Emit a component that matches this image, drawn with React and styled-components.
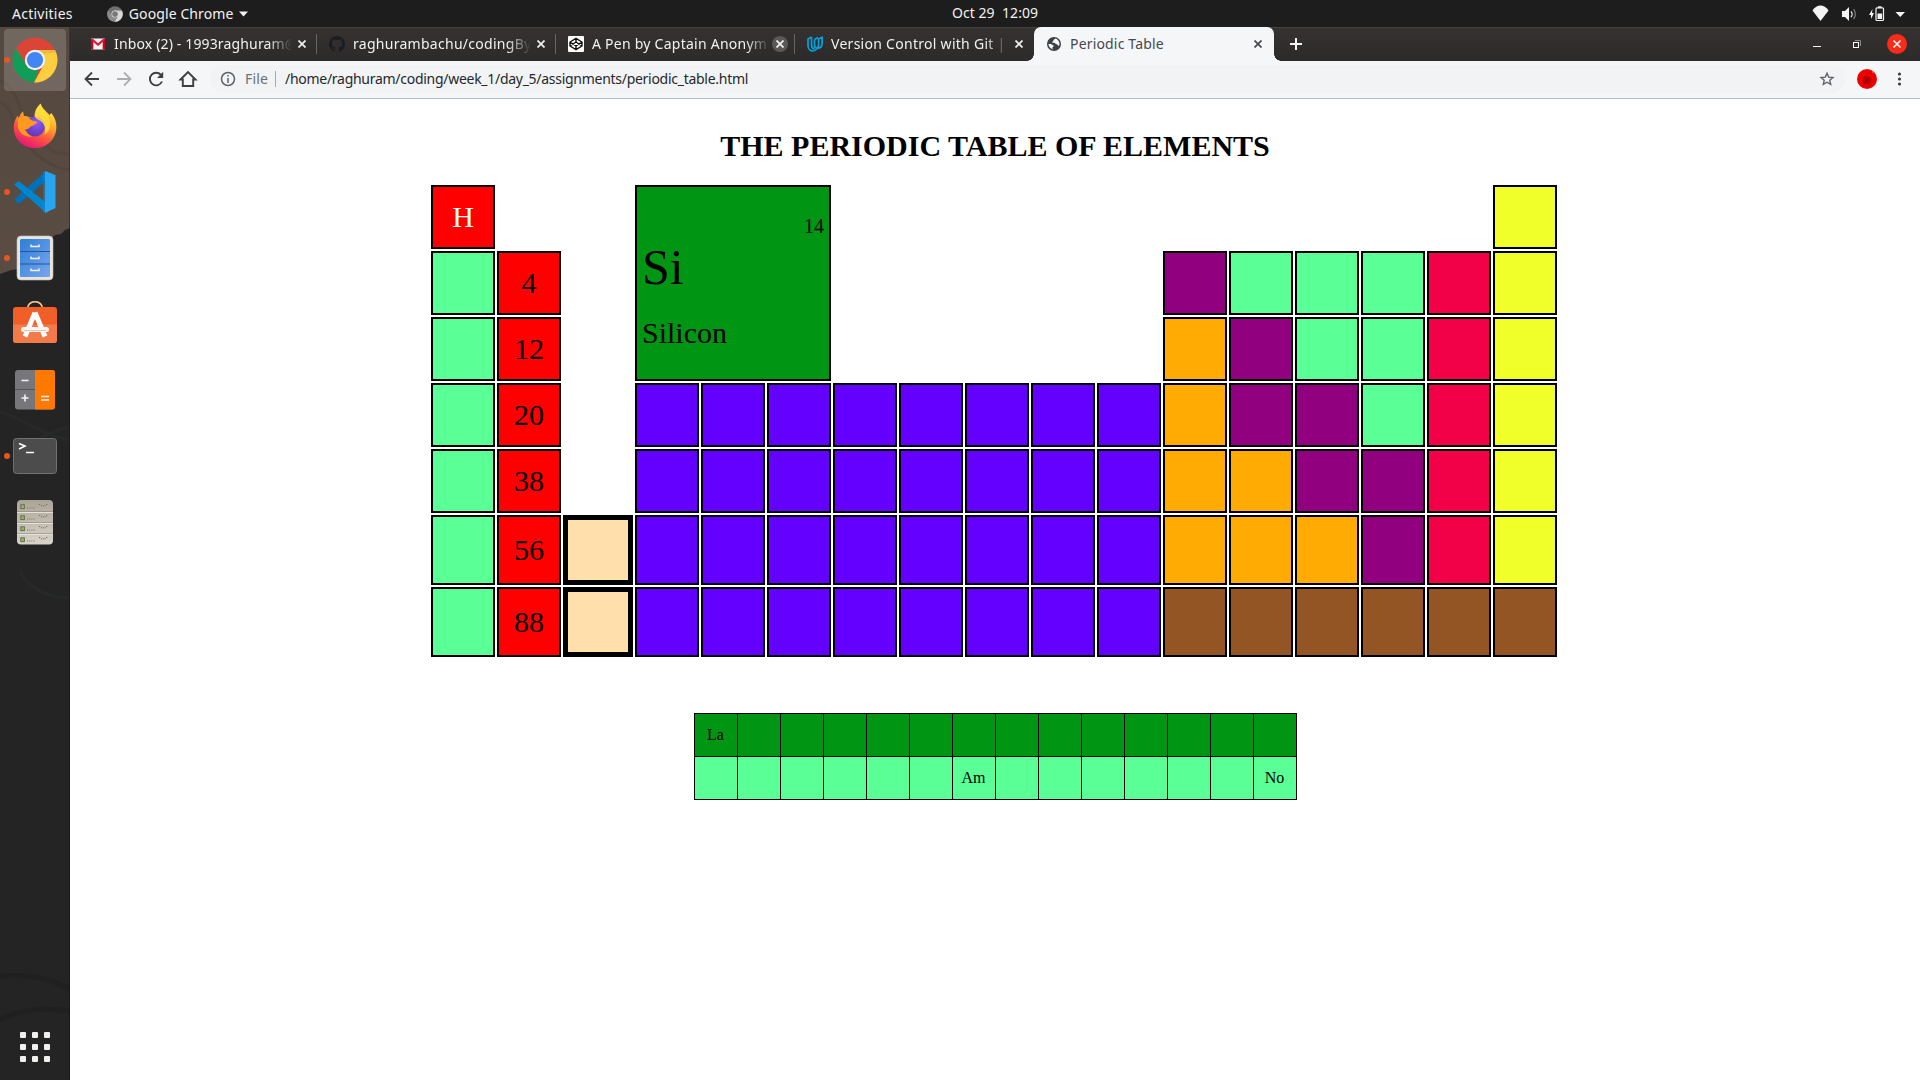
import React from "react";
import styled, { createGlobalStyle } from "styled-components";

const GlobalStyle = createGlobalStyle`
  *, *::before, *::after { box-sizing: border-box; }
  html, body { margin: 0; padding: 0; }
  body { background: #fff; overflow: hidden; }
  svg { display: block; flex: none; }
`;

const ui = `"Noto Sans", "Open Sans", sans-serif`;
const serif = `"Liberation Serif", "Times New Roman", serif`;

const Desktop = styled.div`
  width: 1920px;
  height: 1080px;
  display: grid;
  grid-template-rows: 27px 1fr;
  font-family: ${ui};
`;

/* ---------- Top panel ---------- */
const TopPanel = styled.header`
  display: grid;
  grid-template-columns: 952px 1fr auto;
  align-items: center;
  background: #1d1d1d;
  color: #f2f2f2;
  font-size: 14px;
  line-height: 26px;
  height: 27px;
  padding-right: 15px;
`;
const PanelGroup = styled.div`
  display: flex;
  align-items: center;
  height: 26px;
`;
const PanelText = styled.span`
  letter-spacing: ${(p) => p.$spacing || 0}px;
  margin-left: ${(p) => p.$left || 0}px;
  margin-right: ${(p) => p.$right || 0}px;
  white-space: pre;
`;
const Clock = styled(PanelText)`
  line-height: 24px;
  margin-bottom: 2px;
`;

/* ---------- Workspace and dock ---------- */
const Workspace = styled.div`
  display: grid;
  grid-template-columns: 70px 1fr;
  min-height: 0;
`;
const Dock = styled.nav`
  display: grid;
  grid-template: 1053px / 70px;
  & > * { grid-area: 1 / 1; }
`;
const DockItems = styled.div`
  display: flex;
  flex-direction: column;
  gap: 4px;
  padding: 2px 4px 2px;
  z-index: 1;
  border-right: 1px solid rgba(0, 0, 0, 0.3);
`;
const DockTile = styled.div`
  width: 62px;
  height: 62px;
  display: flex;
  align-items: center;
  border-radius: 4px;
  background: ${(p) => (p.$active ? "rgba(255,255,255,0.17)" : "transparent")};
  margin-top: ${(p) => (p.$last ? "auto" : 0)};
`;
const RunningDot = styled.i`
  width: 6px;
  height: 6px;
  border-radius: 50%;
  margin-right: 2px;
  background: ${(p) => (p.$on ? "#e95420" : "transparent")};
`;

/* ---------- Browser window ---------- */
const Browser = styled.main`
  display: grid;
  grid-template-rows: 34px 38px 1fr;
  min-width: 0;
`;
const TabStrip = styled.div`
  display: flex;
  background: linear-gradient(#353230, #2d2a2b);
  box-shadow: inset 0 1px 0 #45423e;
  padding-left: 8px;
`;
const Tab = styled.div`
  width: ${(p) => (p.$active ? 240 : 239)}px;
  height: 34px;
  display: flex;
  align-items: center;
  padding-left: 12px;
  color: ${(p) => (p.$active ? "#45484c" : "#f1f1f1")};
  background: ${(p) => (p.$active ? "#f5f6f8" : "transparent")};
  border-radius: 7px 7px 0 0;
  position: relative;
  &::before, &::after {
    content: "";
    display: ${(p) => (p.$active ? "block" : "none")};
    position: absolute;
    bottom: 0;
    width: 7px;
    height: 7px;
  }
  &::before {
    left: -7px;
    background: radial-gradient(circle at 0 0, transparent 6.5px, #f5f6f8 7px);
  }
  &::after {
    right: -7px;
    background: radial-gradient(circle at 100% 0, transparent 6.5px, #f5f6f8 7px);
  }
`;
const TabTitle = styled.span`
  width: 178px;
  margin-left: 8px;
  font-size: 14px;
  line-height: 32px;
  white-space: nowrap;
  letter-spacing: ${(p) => p.$spacing || 0}px;
  mask-image: ${(p) => (p.$fade ? "linear-gradient(90deg, #000 154px, transparent 178px)" : "none")};
`;
const TabClose = styled.span`
  width: 16px;
  height: 16px;
  margin-left: 2px;
  border-radius: 50%;
  display: grid;
  place-items: center;
  background: ${(p) => (p.$hover ? "#5b5958" : "transparent")};
`;
const TabDivider = styled.i`
  width: 1px;
  height: 20px;
  margin-left: auto;
  background: #686665;
`;
const NewTab = styled.div`
  width: 30px;
  margin-left: 7px;
  display: grid;
  place-items: center;
`;
const WindowButtons = styled.div`
  display: flex;
  align-items: center;
  gap: 20px;
  margin-left: auto;
  padding-right: 13px;
`;

const Toolbar = styled.div`
  display: flex;
  align-items: center;
  background: #f5f6f8;
  border-bottom: 1px solid #b8bfc9;
  padding: 0 11px 1px 12px;
`;
const NavButtons = styled.div`
  display: flex;
  gap: 12px;
`;
const Omnibox = styled.div`
  flex: 1;
  height: 28px;
  margin: 0 12px;
  padding: 0 8px 0 9px;
  border-radius: 14px;
  background: #f1f3f4;
  display: flex;
  align-items: center;
  font-size: 14px;
  line-height: 26px;
`;
const Scheme = styled.span`
  margin-left: 8px;
  color: #6c7075;
  letter-spacing: 0.2px;
  width: 30px;
`;
const SchemeDivider = styled.i`
  width: 1px;
  height: 16px;
  background: #a9abae;
  margin-right: 9px;
`;
const Url = styled.span`
  color: #26282b;
  letter-spacing: -0.28px;
  flex: 1;
  white-space: nowrap;
`;
const MenuButton = styled.div`
  margin-left: 10px;
`;

/* ---------- Page ---------- */
const Page = styled.section`
  background: #fff;
  display: flex;
  flex-direction: column;
  align-items: center;
  font-family: ${serif};
  color: #000;
`;
const Title = styled.h1`
  font-size: 30px;
  line-height: 34px;
  font-weight: bold;
  margin: 30px 0 22px;
`;
const Elements = styled.div`
  display: grid;
  grid-template-columns: 64px 64px 70px repeat(14, 64px);
  grid-template-rows: repeat(5, 64px) 70px 70px;
  gap: 2px;
  margin-right: 2px;
`;
const fills = {
  g: "#5aff96",
  r: "#ff0000",
  c: "#ffe0ad",
  v: "#6400ff",
  p: "#91007f",
  o: "#ffab03",
  k: "#f20048",
  y: "#f0ff29",
  b: "#935524",
  d: "#009614",
};
const Cell = styled.div`
  grid-column: ${(p) => p.$col};
  grid-row: ${(p) => p.$row};
  border: ${(p) => (p.$kind === "c" ? 5 : 2)}px solid #000;
  background: ${(p) => fills[p.$kind]};
  color: ${(p) => (p.$light ? "#fff" : "#000")};
  display: grid;
  place-items: center;
  font-size: 30px;
  line-height: 34px;
`;
const Featured = styled.div`
  grid-column: 4 / span 3;
  grid-row: 1 / span 3;
  border: 2px solid #000;
  background: ${fills.d};
  padding: 28px 5px 0;
  display: flex;
  flex-direction: column;
`;
const AtomicNumber = styled.span`
  align-self: flex-end;
  font-size: 20px;
  line-height: 23px;
`;
const Symbol = styled.span`
  font-size: 50px;
  line-height: 58px;
`;
const ElementName = styled.span`
  margin-top: 20px;
  font-size: 30px;
  line-height: 34px;
`;
const Series = styled.div`
  display: grid;
  grid-template-columns: repeat(14, 43px);
  grid-auto-rows: 43px;
  border-top: 1px solid #000;
  border-left: 1px solid #000;
  margin-top: 56px;
`;
const SeriesCell = styled.div`
  border-right: 1px solid #000;
  border-bottom: 1px solid #000;
  background: ${(p) => fills[p.$kind]};
  display: grid;
  place-items: center;
  font-size: 16px;
  line-height: 18px;
`;

const rows = [
  "r...............y",
  "gr.........pgggky",
  "gr.........opggky",
  "gr.vvvvvvvvoppgky",
  "gr.vvvvvvvvooppky",
  "grcvvvvvvvvooopky",
  "grcvvvvvvvvbbbbbb",
];
const labels = { "0-0": "H", "1-1": "4", "2-1": "12", "3-1": "20", "4-1": "38", "5-1": "56", "6-1": "88" };
const seriesLabels = { 0: "La", 20: "Am", 27: "No" };

/* ---------- Icons ---------- */
const ChromeIcon = ({ size = 46, mono }) => {
  const c = mono ? ["#6f6f6f", "#8c8c8c", "#d8d8d8", "#777"] : ["#db4437", "#0f9d58", "#ffcd40", "#4285f4"];
  return (
    <svg width={size} height={size} viewBox="0 0 46 46">
      <circle cx="23" cy="23" r="22.4" fill={c[0]} />
      <path d="M23 13h20.1A22.4 22.4 0 0 1 22 45.4L31.7 28z" fill={c[2]} />
      <path d="M3.9 11.3 14.3 28a10 10 0 0 0 12.5 4.2L22 45.4A22.4 22.4 0 0 1 3.9 11.3z" fill={c[1]} />
      <path d="M23 13h20.1l1 2.5L31 17z" fill="#000" opacity=".08" />
      <circle cx="23" cy="23" r="10.2" fill={mono ? "#e2e2e2" : "#f4f4f4"} />
      <circle cx="23" cy="23" r="8.1" fill={c[3]} />
    </svg>
  );
};
const FirefoxIcon = () => (
  <svg width="46" height="46" viewBox="0 .5 46 48">
    <defs>
      <linearGradient id="ffBody" x1=".8" y1="0" x2=".3" y2="1">
        <stop offset="0" stopColor="#fff44f" />
        <stop offset=".35" stopColor="#ffb42c" />
        <stop offset=".65" stopColor="#ff5a3c" />
        <stop offset="1" stopColor="#e4127c" />
      </linearGradient>
      <radialGradient id="ffGlobe" cx=".6" cy=".3" r=".8">
        <stop offset="0" stopColor="#9059ff" />
        <stop offset=".6" stopColor="#7040c8" />
        <stop offset="1" stopColor="#5b3aa8" />
      </radialGradient>
    </defs>
    <path d="M29 1c1 5 6 8 9 12l2-2c4 5 5.500 10 5.300 15C45 38 35.500 47.500 23 47.500S.8 38.500.8 26c0-6 2.200-10 4.200-12.500L6 17c1-4 2.500-6 4.500-8l1 5c2.500 0 4 .5 5.500 1.500h5.500C22 9 25 4.500 29 1z" fill="url(#ffBody)" />
    <circle cx="23" cy="25" r="10.500" fill="url(#ffGlobe)" />
    <path d="M5.500 16c6-3 10-2 13 2 2 1.500 5 1.500 7 2-1 3-4 3.500-6 4.500-3 1.500-3 4-7.500 3.500 2 3.500 4 6 8 7.500-8 1-14-4-15-11z" fill="#ff9a1f" />
    <path d="M29 2c0 6 7 9 9 16 2 6 0 13-5 16 1-5 1-9-2-13-3-3-6-3-8-6 0-5 2-10 6-13z" fill="#ffe13c" opacity=".8" />
  </svg>
);
const CodeIcon = () => (
  <svg width="46" height="46" viewBox="0 0 46 46">
    <path d="M2 30.500 6.500 35 36 10V2L33 2.500z" fill="#0070b8" />
    <path d="M2 15.500 6.500 12 36 35v8.500l-3-.5z" fill="#0086ce" />
    <path d="M33 2 43.500 6v33L33 44z" fill="#27a4f2" />
    <path d="M32.500 2v42l-1-1V3z" fill="#1685cf" />
  </svg>
);
const FilesIcon = () => (
  <svg width="46" height="46" viewBox="0 0 46 46">
    <defs>
      <linearGradient id="drawer" x1="0" y1="0" x2="1" y2="1">
        <stop offset="0" stopColor="#2c7fd8" />
        <stop offset="1" stopColor="#7aa6ee" />
      </linearGradient>
    </defs>
    <rect x="5" y="1" width="36" height="44" rx="4" fill="#e9e4dc" stroke="#c8c1b7" strokeWidth=".6" />
    <rect x="8" y="4" width="30" height="38" rx="1.500" fill="url(#drawer)" />
    <path d="M8 16.500h30M8 29h30" stroke="#23549c" />
    <path d="M19 9.500v2h8v-2M19 21.500v2h8v-2M19 33.500v2h8v-2" fill="none" stroke="#f3efe9" strokeWidth="1.500" />
  </svg>
);
const SoftwareIcon = () => (
  <svg width="46" height="46" viewBox="0 1.500 46 46">
    <path d="M15.500 9a7.500 6.800 0 0 1 15 0" fill="none" stroke="#efc18b" strokeWidth="1.800" />
    <rect x="1" y="7.500" width="44" height="36" rx="3" fill="#f05f27" />
    <path d="M1 25h44v15.500a3 3 0 0 1-3 3H4a3 3 0 0 1-3-3z" fill="#f37a49" />
    <path d="M23 13v.1L13 37M23 13l10 24" stroke="#fff" strokeWidth="5" fill="none" strokeLinejoin="bevel" />
    <path d="M11.500 30h23" stroke="#fff4ee" strokeWidth="5" strokeLinecap="round" />
    <path d="M12 31h22" stroke="#e2b9a8" strokeWidth=".8" />
  </svg>
);
const CalculatorIcon = () => (
  <svg width="46" height="46" viewBox="0 0 46 46">
    <rect x="3" y="3" width="40" height="39.500" rx="3" fill="#77767b" />
    <path d="M23 3h17a3 3 0 0 1 3 3v33.500a3 3 0 0 1-3 3H23z" fill="#ff7800" />
    <path d="M3 22.500h20" stroke="#55545a" />
    <path d="M9.500 13.500h7M9.500 31h7M13 27.500v7M29 29.500h8M29 33h8" stroke="#f4f4f4" strokeWidth="1.600" />
  </svg>
);
const TerminalIcon = () => (
  <svg width="46" height="46" viewBox="0 0 46 46">
    <rect x="1.500" y="5.500" width="43" height="35" rx="3" fill="#4c4c4c" stroke="#717171" />
    <path d="M7 10.500 13 13l-6 3" fill="none" stroke="#fff" strokeWidth="1.600" />
    <path d="M14 19.500h8" stroke="#fff" strokeWidth="1.500" />
  </svg>
);
const ServersIcon = () => (
  <svg width="46" height="46" viewBox="0 0 46 46">
    <defs>
      <linearGradient id="rack" x1="0" y1="0" x2="0" y2="1">
        <stop offset="0" stopColor="#aba496" />
        <stop offset="1" stopColor="#d9d4ca" />
      </linearGradient>
    </defs>
    <rect x="5" y="1" width="36" height="44.500" rx="4" fill="url(#rack)" />
    {[0, 1, 2, 3].map((i) => (
      <g key={i} transform={`translate(0 ${i * 11})`}>
        {i > 0 && <path d="M5 2.500h36" stroke="#f2efe9" />}
        {i > 0 && <path d="M5 1.700h36" stroke="#827b70" strokeWidth=".6" />}
        <rect x="8.800" y="5.800" width="3.600" height="3.800" fill="#8ac541" stroke="#6b6a60" />
        <path d="M15 9h8" stroke="#777064" strokeDasharray="1 1.200" />
        <path d="M27 5.500h2m5 0h2M29 6.800h5" stroke="#777064" strokeDasharray="1 .8" />
      </g>
    ))}
  </svg>
);
const AppsIcon = () => (
  <svg width="46" height="46" viewBox="0 0 46 46">
    {[8, 20, 32].map((y) =>
      [8, 20, 32].map((x) => <rect key={`${x}${y}`} x={x} y={y} width="6" height="6" rx="1" fill="#f0f0ee" />)
    )}
  </svg>
);
const Wallpaper = () => (
  <svg width="70" height="1053" viewBox="0 0 70 1053">
    <defs>
      <linearGradient id="clay" x1="0" y1="0" x2="0" y2="1">
        <stop offset="0" stopColor="#54493f" />
        <stop offset="1" stopColor="#5a4c43" />
      </linearGradient>
    </defs>
    <rect width="70" height="1053" fill="#232423" />
    <path d="M0 0h70v201l-5 2-4 4-6 1-4 4-9 6-14 9-8 15-9 1-11 4z" fill="url(#clay)" />
    <path d="M0 54c18 2 20 42 40 60s22 10 30 14M0 75c14 4 14 32 34 50s28 16 36 18" fill="none" stroke="#4b4037" strokeWidth="3" opacity=".5" />
    <path d="M0 949c25-2 50 2 70 13M0 993c22-12 44-12 70-9" fill="none" stroke="#1b1c1b" strokeWidth="5" opacity=".5" />
    <path d="M0 385c20 5 45 24 70 28M10 430c22-16 40-26 60-30M20 545c8 16 26 25 50 26" fill="none" stroke="#2a2c2b" strokeWidth="3" opacity=".7" />
  </svg>
);
const CloseGlyph = ({ color = "#f1f1f1" }) => (
  <svg width="8" height="8" viewBox="0 0 8 8">
    <path d="M.5.5l7 7M7.500.5l-7 7" stroke={color} strokeWidth="1.700" />
  </svg>
);
const GmailIcon = () => (
  <svg width="16" height="16" viewBox="0 0 16 16">
    <rect x="1" y="2.500" width="14" height="11" rx=".8" fill="#f3f3f3" />
    <path d="M1 13V3l2.300.5V13.500H1.500zM15 13V3l-2.300.5V13.500h1.800z" fill="#d0021b" />
    <path d="M2 3.500l6 5 6-5" fill="none" stroke="#e2173a" strokeWidth="2.200" />
  </svg>
);
const GithubIcon = () => (
  <svg width="16" height="16" viewBox="0 0 16 16">
    <path fill="#1b1d20" d="M8 0C3.580 0 0 3.580 0 8c0 3.540 2.290 6.530 5.470 7.590.4.070.55-.17.55-.38 0-.19-.01-.82-.01-1.490-2.010.37-2.530-.49-2.690-.94-.09-.23-.48-.94-.82-1.130-.28-.15-.68-.52-.01-.53.63-.01 1.080.58 1.230.82.72 1.210 1.870.87 2.330.66.070-.52.28-.87.51-1.070-1.780-.2-3.640-.89-3.640-3.950 0-.87.31-1.590.82-2.150-.08-.2-.36-1.020.08-2.120 0 0 .67-.21 2.200.82a7.500 7.500 0 0 1 4 0c1.530-1.040 2.200-.82 2.200-.82.44 1.100.16 1.920.08 2.120.51.56.82 1.270.82 2.150 0 3.070-1.870 3.750-3.650 3.950.29.25.54.73.54 1.480 0 1.070-.01 1.930-.01 2.200 0 .21.15.46.55.38A8 8 0 0 0 16 8c0-4.420-3.580-8-8-8z" />
  </svg>
);
const CodepenIcon = () => (
  <svg width="16" height="16" viewBox="0 0 16 16">
    <rect width="16" height="16" rx="1" fill="#fff" />
    <path d="M8 2.300 14 6v4l-6 3.700L2 10V6zM2 6l6 4 6-4M2 10l6-4 6 4M8 2.300V6M8 10v3.700" fill="none" stroke="#111" strokeWidth="1.400" strokeLinejoin="round" />
  </svg>
);
const UdacityIcon = () => (
  <svg width="16" height="16" viewBox="0 0 16 16" fill="none" stroke="#02a5df" strokeWidth="1.700" strokeLinejoin="round">
    <path d="M4.500 1 1 3v6.500c0 3 2 5.500 4.700 5.500 1.300 0 2.500-.5 3.500-1.500" />
    <path d="M4.500 1v8c0 2 1.200 3.600 3 4.200M7.500 3.500 11 1.500" />
    <path d="M7.500 3.500V9c0 2 1 3.200 2.700 3.200 3 0 4.900-2 4.900-5V1.200L11.600 3v6c0 1.500-.5 3-2.400 4.500" />
  </svg>
);
const GlobeIcon = () => (
  <svg width="16" height="16" viewBox="0 0 16 16">
    <circle cx="8" cy="8" r="7" fill="#3c4043" />
    <path d="M9.200 2.500c-.6 1-1.700 1-1.900 2-.2 1.200-1 1-1.200 1.900.9.800 2.700-.2 3.300 1.200.4 1 2 .4 2.500 1.600.3 1 1 .8 1.500-.2A5.500 5.500 0 0 0 9.200 2.500zM2.500 7.800c.9.500 2.200-.1 3.200.7 1 .8 2.200.6 2 1.600-.3 1-1.400 1-1.300 2.100.1.600.6.700 1 1.200a5.500 5.500 0 0 1-4.900-5.600z" fill="#f5f6f8" />
  </svg>
);

const tabs = [
  { icon: <GmailIcon />, title: "Inbox (2) - 1993raghuram@", spacing: 0.15 },
  { icon: <GithubIcon />, title: "raghurambachu/codingBy", spacing: 0.28 },
  { icon: <CodepenIcon />, title: "A Pen by Captain Anonym", spacing: 0.25, hover: true },
  { icon: <UdacityIcon />, title: "Version Control with Git |", spacing: 0.28 },
];
const dockApps = [
  { icon: <ChromeIcon />, running: true, active: true },
  { icon: <FirefoxIcon /> },
  { icon: <CodeIcon />, running: true },
  { icon: <FilesIcon />, running: true },
  { icon: <SoftwareIcon /> },
  { icon: <CalculatorIcon /> },
  { icon: <TerminalIcon />, running: true },
  { icon: <ServersIcon /> },
];

const SystemIcons = () => (
  <svg width="94" height="20" viewBox="0 0 94 20" fill="#f4f4f4">
    <path d="M1.500 6.500C6-.2 13-.2 17.500 6.500L9.500 17z" />
    <path d="M31 7h3l4-4v14l-4-4h-3z" />
    <path d="M40 7.500c1.400 1.400 1.400 4 0 5.500" fill="none" stroke="#f4f4f4" strokeWidth="1.300" />
    <path d="M42.500 5.200c2.500 2.600 2.500 7 0 9.800" fill="none" stroke="#777" strokeWidth="1.300" />
    <path d="M61.500 5 58 11h2v4l3-6h-2z" />
    <rect x="65" y="3.800" width="7.500" height="12.700" rx="1" fill="none" stroke="#f4f4f4" strokeWidth="1.200" />
    <path d="M67 2.200h3.500v1.500H67zM66.500 9.500h4.600v5.500h-4.600z" />
    <path d="M84.500 8h9.500l-4.700 5z" />
  </svg>
);

export default function App() {
  return (
    <Desktop>
      <GlobalStyle />
      <TopPanel>
        <PanelGroup>
          <PanelText $left={12} $right={34} $spacing={0.25}>Activities</PanelText>
          <ChromeIcon size={16} mono />
          <PanelText $left={6} $right={6} $spacing={0.1}>Google Chrome</PanelText>
          <svg width="9" height="6" viewBox="0 0 9 6"><path d="M0 .5h9L4.500 5.500z" fill="#f2f2f2" /></svg>
        </PanelGroup>
        <Clock $spacing={0.05}>{"Oct 29  12:09"}</Clock>
        <PanelGroup><SystemIcons /></PanelGroup>
      </TopPanel>

      <Workspace>
        <Dock>
          <Wallpaper />
          <DockItems>
            {dockApps.map((app, i) => (
              <DockTile key={i} $active={app.active}>
                <RunningDot $on={app.running} />
                {app.icon}
              </DockTile>
            ))}
            <DockTile $last>
              <RunningDot />
              <AppsIcon />
            </DockTile>
          </DockItems>
        </Dock>

        <Browser>
          <TabStrip>
            {tabs.map((t, i) => (
              <Tab key={t.title}>
                {t.icon}
                <TabTitle $fade $spacing={t.spacing}>{t.title}</TabTitle>
                <TabClose $hover={t.hover}><CloseGlyph /></TabClose>
                {i < 3 && <TabDivider />}
              </Tab>
            ))}
            <Tab $active>
              <GlobeIcon />
              <TabTitle $spacing={0.17}>Periodic Table</TabTitle>
              <TabClose><CloseGlyph color="#45484c" /></TabClose>
            </Tab>
            <NewTab>
              <svg width="12" height="12" viewBox="0 0 12 12"><path d="M6 0v12M0 6h12" stroke="#f4f4f4" strokeWidth="2" /></svg>
            </NewTab>
            <WindowButtons>
              <svg width="20" height="20" viewBox="0 0 20 20"><path d="M6 12.500h8" stroke="#f4f4f4" /></svg>
              <svg width="20" height="20" viewBox="0 0 20 20" fill="none">
                <path d="M8 6.500h5.500V12" stroke="#8b8988" />
                <rect x="6.500" y="8.500" width="5" height="5" stroke="#fff" />
              </svg>
              <svg width="20" height="20" viewBox="0 0 20 20">
                <circle cx="10" cy="10" r="10" fill="#fa2c19" />
                <path d="M6.500 6.500l7 7M13.500 6.500l-7 7" stroke="#fff" strokeWidth="1.500" />
              </svg>
            </WindowButtons>
          </TabStrip>

          <Toolbar>
            <NavButtons>
              <svg width="20" height="20" viewBox="0 0 20 20" fill="none" stroke="#3c4043" strokeWidth="1.800"><path d="M17 10H4M10 3.500 3.500 10l6.500 6.500" /></svg>
              <svg width="20" height="20" viewBox="0 0 20 20" fill="none" stroke="#acafb2" strokeWidth="1.800"><path d="M3 10h13M10 3.500l6.500 6.500-6.500 6.500" /></svg>
              <svg width="20" height="20" viewBox="0 0 20 20">
                <path d="M15.300 6.300A6.300 6.300 0 1 0 16 12.500" fill="none" stroke="#3c4043" strokeWidth="1.900" />
                <path d="M17.200 2.800V9H11z" fill="#3c4043" />
              </svg>
              <svg width="20" height="20" viewBox="0 0 20 20" fill="none" stroke="#3c4043" strokeWidth="1.900"><path d="M2.500 10.500 10 3l7.500 7.500h-2.300V17H4.800v-6.500z" /></svg>
            </NavButtons>
            <Omnibox>
              <svg width="18" height="18" viewBox="0 0 18 18" fill="none" stroke="#5f6368" strokeWidth="1.500">
                <circle cx="9" cy="9" r="6.500" />
                <path d="M9 8v5M9 5v1.600" />
              </svg>
              <Scheme>File</Scheme>
              <SchemeDivider />
              <Url>/home/raghuram/coding/week_1/day_5/assignments/periodic_table.html</Url>
              <svg width="20" height="20" viewBox="0 0 20 20" fill="none" stroke="#5f6368" strokeWidth="1.400"><path d="M10 4.200l1.700 3.900 4.300.4-3.200 2.800.9 4.100-3.700-2.200-3.700 2.200.9-4.100L4 8.500l4.300-.4z" /></svg>
            </Omnibox>
            <svg width="20" height="20" viewBox="0 0 20 20">
              <circle cx="10" cy="10" r="10" fill="#f40000" />
              <circle cx="10" cy="10" r="7" fill="none" stroke="#dc0000" strokeWidth="2.500" strokeDasharray="1.500 1.300" />
              <circle cx="10" cy="11" r="4.500" fill="#c00000" />
              <circle cx="10" cy="11" r="1.800" fill="#860000" />
              <circle cx="16" cy="3" r=".8" fill="#ffa000" />
            </svg>
            <MenuButton>
              <svg width="22" height="20" viewBox="0 0 22 20" fill="#3c4043">
                <circle cx="12.500" cy="5" r="1.600" /><circle cx="12.500" cy="10" r="1.600" /><circle cx="12.500" cy="15" r="1.600" />
              </svg>
            </MenuButton>
          </Toolbar>

          <Page>
            <Title>THE PERIODIC TABLE OF ELEMENTS</Title>
            <Elements>
              {rows.map((row, r) =>
                [...row].map((kind, c) =>
                  kind === "." ? null : (
                    <Cell key={`${r}-${c}`} $row={r + 1} $col={c + 1} $kind={kind} $light={r === 0}>
                      {labels[`${r}-${c}`]}
                    </Cell>
                  )
                )
              )}
              <Featured>
                <AtomicNumber>14</AtomicNumber>
                <Symbol>Si</Symbol>
                <ElementName>Silicon</ElementName>
              </Featured>
            </Elements>
            <Series>
              {Array.from({ length: 28 }, (_, i) => (
                <SeriesCell key={i} $kind={i < 14 ? "d" : "g"}>{seriesLabels[i]}</SeriesCell>
              ))}
            </Series>
          </Page>
        </Browser>
      </Workspace>
    </Desktop>
  );
}
